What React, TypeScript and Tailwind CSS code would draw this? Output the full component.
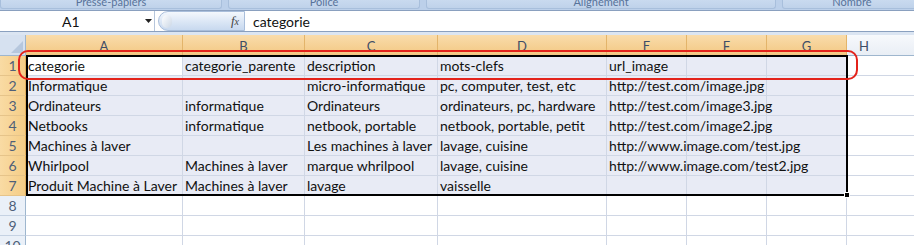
import React from "react";

const widths = [157, 122, 133, 169, 80, 80, 80];
const letters = ["A", "B", "C", "D", "E", "F", "G"];

const data: string[][] = [
  ["categorie", "categorie_parente", "description", "mots-clefs", "url_image", "", ""],
  ["Informatique", "", "micro-informatique", "pc, computer, test, etc", "http://test.com/image.jpg", "", ""],
  ["Ordinateurs", "informatique", "Ordinateurs", "ordinateurs, pc, hardware", "http://test.com/image3.jpg", "", ""],
  ["Netbooks", "informatique", "netbook, portable", "netbook, portable, petit", "http://test.com/image2.jpg", "", ""],
  ["Machines à laver", "", "Les machines à laver", "lavage, cuisine", "http://www.image.com/test.jpg", "", ""],
  ["Whirlpool", "Machines à laver", "marque whrilpool", "lavage, cuisine", "http://www.image.com/test2.jpg", "", ""],
  ["Produit Machine à Laver", "Machines à laver", "lavage", "vaisselle", "", "", ""],
];

function RowHeader({ n, selected }: { n: number; selected: boolean }) {
  return (
    <div
      className={
        selected
          ? "w-[26px] h-[20px] shrink-0 border-r border-b border-r-[#e0ae5c] border-b-[#e6c48a] bg-gradient-to-r from-[#f9dba4] to-[#f5cd86] text-[#4f5f78] text-[14px] leading-[19px] text-center"
          : "w-[26px] h-[20px] shrink-0 border-r border-b border-r-[#9eb6ce] border-b-[#c5d2e3] bg-[#eaf0f8] text-[#4f5f78] text-[14px] leading-[19px] text-center"
      }
    >
      {n}
    </div>
  );
}

export default function App() {
  const groups = [
    { w: 222, label: "Presse-papiers" },
    { w: 192, label: "Police" },
    { w: 350, label: "Alignement" },
    { w: 140, label: "Nombre" },
  ];
  return (
    <div
      className="relative w-[914px] h-[245px] overflow-hidden bg-white text-[#111]"
      style={{ fontFamily: "Lato, 'Open Sans', sans-serif" }}
    >
      {/* ribbon group labels */}
      <div className="h-[11px] bg-[#bcd0ea] border-b border-[#8aa0bf] flex gap-[6px] overflow-hidden">
        {groups.map((g) => (
          <div
            key={g.label}
            className="h-[9px] shrink-0 bg-gradient-to-b from-[#c9daef] to-[#bfd2ea] border border-t-0 border-[#a8bfdc] rounded-b-[3px] overflow-hidden flex justify-center"
            style={{ width: g.w }}
          >
            <span className="text-[11px] leading-[11px] -mt-[4px] text-[#58739a]">{g.label}</span>
          </div>
        ))}
      </div>

      {/* formula bar */}
      <div className="h-[21px] flex items-stretch border-b border-[#8aa0bf] bg-white">
        <div className="w-[155px] shrink-0 flex items-center border-r border-[#b6c6dc] relative">
          <span className="ml-[62px] text-[14px] text-[#111]">A1</span>
          <svg className="absolute left-[145px] top-[8px]" width="7" height="4" viewBox="0 0 7 4">
            <path d="M0 0 H7 L3.5 4 Z" fill="#222" />
          </svg>
        </div>
        <div className="w-[87px] shrink-0 relative flex items-center justify-end pr-[5px] bg-gradient-to-b from-[#f4f8fd] via-[#dde8f6] to-[#c8d9ef] rounded-l-[12px] border border-[#a9bedb] ml-[3px]">
          <div className="absolute left-[3px] top-[3px] w-[10px] h-[13px] rounded-full bg-gradient-to-br from-white to-[#cbd7e6]" />
          <span className="italic text-[13px] text-[#444]" style={{ fontFamily: "'Liberation Serif', serif" }}>
            f<span className="text-[10px]">x</span>
          </span>
        </div>
        <div className="flex-1 flex items-center pl-[8px] text-[14px] text-[#111]">categorie</div>
      </div>

      {/* gap under formula bar */}
      <div className="h-[3px] bg-[#dbe5f2]" />

      {/* column headers */}
      <div className="flex h-[21px]">
        <div className="w-[26px] shrink-0 bg-[#d6e1f0] border-r border-b border-[#9eb6ce] relative">
          <svg className="absolute right-[2px] bottom-[2px]" width="12" height="12" viewBox="0 0 12 12">
            <path d="M12 0 V12 H0 Z" fill="#b6c7dd" />
          </svg>
        </div>
        {letters.map((l, i) => (
          <div
            key={l}
            className="shrink-0 h-full border-r border-b border-r-[#e3b46a] border-b-[#c89a52] bg-gradient-to-b from-[#f9dcab] to-[#f3c883] text-[13px] leading-[22px] text-center text-[#3e4d66]"
            style={{ width: widths[i] }}
          >
            {l}
          </div>
        ))}
        <div className="flex-1 h-full border-b border-[#9eb6ce] bg-gradient-to-b from-[#f7f9fc] to-[#e9eef5] text-[13px] leading-[22px] text-[#3e4d66] pl-[12px]">
          H
        </div>
      </div>

      {/* data rows */}
      {data.map((row, r) => (
        <div key={r} className="flex h-[20px]">
          <RowHeader n={r + 1} selected />
          {row.map((v, c) => (
            <div
              key={c}
              className={
                (r === 0 && c === 0 ? "bg-white " : "bg-[#e8ebf5] ") +
                "shrink-0 h-full border-r border-b border-[#d0d7e5] text-[14px] leading-[19px] pl-[2px] whitespace-nowrap"
              }
              style={{ width: widths[c] }}
            >
              <span className="relative z-[1]">{v}</span>
            </div>
          ))}
          <div className="flex-1 h-full border-b border-[#d0d7e5] bg-white" />
        </div>
      ))}
      {[8, 9, 10].map((n) => (
        <div key={n} className="flex h-[20px]">
          <RowHeader n={n} selected={false} />
          {widths.map((w, c) => (
            <div key={c} className="shrink-0 h-full border-r border-b border-[#d0d7e5] bg-white" style={{ width: w }} />
          ))}
          <div className="flex-1 h-full border-b border-[#d0d7e5] bg-white" />
        </div>
      ))}

      {/* selection border */}
      <div className="absolute left-[26px] top-[55px] w-[822px] h-[141px] border-2 border-black pointer-events-none z-10" />
      <div className="absolute left-[844px] top-[192px] w-[6px] h-[6px] bg-black border border-white z-10" />

      {/* red highlight */}
      <div className="absolute left-[18px] top-[50px] w-[840px] h-[30px] rounded-[10px] border-2 border-[#e3231b] z-20 pointer-events-none" />
    </div>
  );
}
